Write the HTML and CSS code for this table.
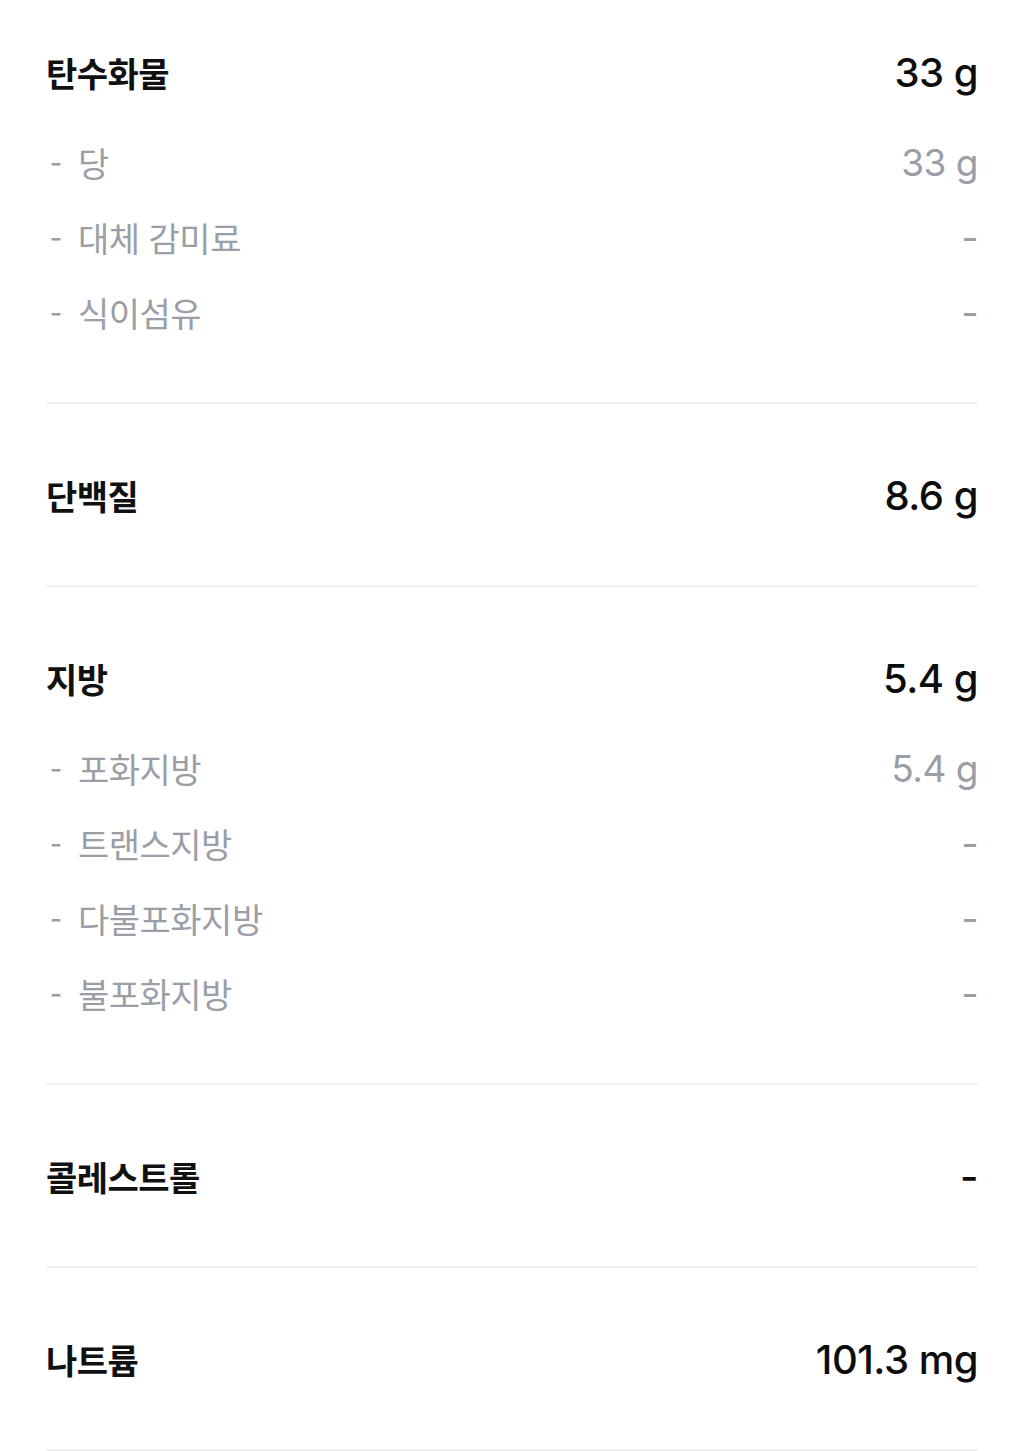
FILE: index.html
```html
<!DOCTYPE html>
<html lang="ko">
<head>
    <meta charset="UTF-8">
    <meta name="viewport" content="width=device-width, initial-scale=1.0">
    <title>영양 정보</title>
    <link rel="stylesheet" href="styles.css">
</head>
<body>
    <div class="nutrition">
        <section class="group">
            <div class="row main"><span class="label">탄수화물</span><span class="value">33 g</span></div>
            <div class="subs">
                <div class="row sub"><span class="label"><span class="dash">-</span>당</span><span class="value">33 g</span></div>
                <div class="row sub"><span class="label"><span class="dash">-</span>대체 감미료</span><span class="value">-</span></div>
                <div class="row sub"><span class="label"><span class="dash">-</span>식이섬유</span><span class="value">-</span></div>
            </div>
        </section>
        <section class="group">
            <div class="row main"><span class="label">단백질</span><span class="value">8.6 g</span></div>
        </section>
        <section class="group">
            <div class="row main"><span class="label">지방</span><span class="value">5.4 g</span></div>
            <div class="subs">
                <div class="row sub"><span class="label"><span class="dash">-</span>포화지방</span><span class="value">5.4 g</span></div>
                <div class="row sub"><span class="label"><span class="dash">-</span>트랜스지방</span><span class="value">-</span></div>
                <div class="row sub"><span class="label"><span class="dash">-</span>다불포화지방</span><span class="value">-</span></div>
                <div class="row sub"><span class="label"><span class="dash">-</span>불포화지방</span><span class="value">-</span></div>
            </div>
        </section>
        <section class="group">
            <div class="row main"><span class="label">콜레스트롤</span><span class="value">-</span></div>
        </section>
        <section class="group">
            <div class="row main"><span class="label">나트륨</span><span class="value">101.3 mg</span></div>
        </section>
    </div>
</body>
</html>
```

FILE: styles.css
```css
body {
    margin: 0;
    background: #fff;
    font-family: "Noto Sans CJK KR", "Noto Sans", sans-serif;
    color: #111;
}
.nutrition {
    padding: 0 46px;
}
.group {
    padding: 54px 0 52px;
    border-bottom: 2px solid #eef0f2;
}
.group:first-child {
    padding-top: 35px;
}
.row {
    display: flex;
    justify-content: space-between;
    align-items: center;
    height: 75px;
}
.label {
    font-size: 34px;
    letter-spacing: -0.5px;
}
.value {
    font-family: Inter, "Noto Sans", sans-serif;
    letter-spacing: -0.5px;
}
.main .label {
    font-weight: 700;
    color: #111;
}
.main .value {
    font-size: 40px;
    font-weight: 500;
    color: #0d0d0d;
}
.subs {
    margin-top: 15px;
}
.sub .label {
    font-weight: 400;
    color: #9a9ea6;
    padding-left: 4px;
}
.dash {
    display: inline-block;
    width: 28px;
}
.sub .value {
    font-size: 37px;
    font-weight: 400;
    color: #9a9ea6;
}
```
